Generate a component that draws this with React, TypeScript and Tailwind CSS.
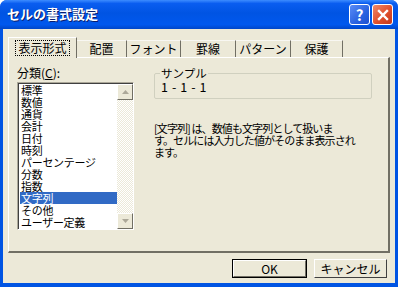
import React from "react";

const jp = { fontFamily: '"Noto Sans CJK JP", "Noto Sans", sans-serif' };

const categories = [
  "標準",
  "数値",
  "通貨",
  "会計",
  "日付",
  "時刻",
  "パーセンテージ",
  "分数",
  "指数",
  "文字列",
  "その他",
  "ユーザー定義",
];

const tabs = [
  { label: "配置", w: "w-[50px]" },
  { label: "フォント", w: "w-[54px]" },
  { label: "罫線", w: "w-[55px]" },
  { label: "パターン", w: "w-[55px]" },
  { label: "保護", w: "w-[52px]" },
];

function TitleButtons() {
  return (
    <div className="flex gap-[2px] pt-[4px]">
      <div className="flex h-[21px] w-[21px] items-center justify-center rounded-[3px] border border-white bg-[linear-gradient(135deg,#5a8cf7,#2a63e0_60%,#1b4fd1)] text-[15px] font-bold leading-none text-white">
        ?
      </div>
      <div className="flex h-[21px] w-[21px] items-center justify-center rounded-[3px] border border-white bg-[linear-gradient(135deg,#f08a6a,#e0502c_55%,#c4381c)]">
        <svg width="12" height="12" viewBox="0 0 12 12">
          <path d="M2 2L10 10M10 2L2 10" stroke="white" strokeWidth="2.4" strokeLinecap="square" />
        </svg>
      </div>
    </div>
  );
}

function ScrollArrow({ up }: { up: boolean }) {
  return (
    <div className="flex h-[16px] w-[16px] items-center justify-center border-t border-l border-r border-b border-t-white border-l-white border-r-[#716f64] border-b-[#716f64] bg-[#ece9d8]">
      <svg width="7" height="4" viewBox="0 0 7 4">
        <path d={up ? "M3.5 0L7 4H0Z" : "M0 0H7L3.5 4Z"} fill="#aca899" />
      </svg>
    </div>
  );
}

export default function App() {
  return (
    <div
      className="flex h-[287px] w-[398px] flex-col overflow-hidden rounded-t-[7px] bg-[#0054e3] text-[12px] text-black"
      style={jp}
    >
      {/* Title bar */}
      <div className="flex h-[29px] shrink-0 items-start justify-between bg-[linear-gradient(#3d8cff_0%,#0a5df0_12%,#0054e3_45%,#0058ee_85%,#0046c8_100%)] pl-[7px] pr-[5px]">
        <span className="pt-[6px] text-[13px] font-bold leading-[16px] text-white [text-shadow:1px_1px_#0a1e6e]">
          セルの書式設定
        </span>
        <TitleButtons />
      </div>

      {/* Body */}
      <div className="mx-[3px] mb-[4px] flex flex-1 flex-col bg-[#ece9d8] px-[5px] pt-[8px]">
        {/* Tabs */}
        <div className="relative z-10 flex h-[20px] items-end">
          <div className="-mb-[1px] flex h-[21px] w-[69px] items-center justify-center border-l border-t border-r border-l-white border-t-white border-r-[#716f64] bg-[#ece9d8]">
            <span className="border border-dotted border-black px-[2px] leading-[14px]">表示形式</span>
          </div>
          {tabs.map((t) => (
            <div
              key={t.label}
              className={`${t.w} flex h-[17px] items-center justify-center border-t border-r border-t-[#f8f7f2] border-r-[#716f64] leading-[14px]`}
            >
              {t.label}
            </div>
          ))}
        </div>

        {/* Panel */}
        <div className="flex h-[196px] w-[382px] flex-col border-t border-l border-r-2 border-b-2 border-t-white border-l-white border-r-[#716f64] border-b-[#716f64] px-[8px] pt-[8px]">
          <div className="flex">
            {/* Category list */}
            <div className="flex w-[130px] flex-col">
              <div className="h-[14px] leading-[14px]">
                分類(<span className="underline">C</span>):
              </div>
              <div className="mt-[2px] flex h-[148px] w-[117px] border-t border-l border-r border-b border-t-[#aca899] border-l-[#aca899] border-r-white border-b-white">
                <div className="flex flex-1 border-t border-l border-t-[#404040] border-l-[#404040] bg-white">
                  <div className="flex flex-1 flex-col pl-[1px]">
                    {categories.map((c) => (
                      <div
                        key={c}
                        className={`h-[12px] shrink-0 whitespace-nowrap pl-[1px] text-[11px] leading-[12px] tracking-[-0.3px] ${
                          c === "文字列" ? "bg-[#316ac5] text-white" : ""
                        }`}
                      >
                        {c}
                      </div>
                    ))}
                  </div>
                  <div className="flex w-[16px] flex-col bg-[repeating-conic-gradient(#ffffff_0_25%,#ece9d8_0_50%)] bg-[length:2px_2px]">
                    <ScrollArrow up />
                    <div className="flex-1" />
                    <ScrollArrow up={false} />
                  </div>
                </div>
              </div>
            </div>

            {/* Sample + description */}
            <div className="flex flex-1 flex-col pl-[7px]">
              <fieldset className="mt-[1px] h-[32px] w-[218px] rounded-[2px] border border-[#d0d0bf] px-[5px]">
                <legend className="px-[1px] text-[11.5px] leading-[12px]">サンプル</legend>
                <div className="mt-[1px] pl-[1px] text-[12.5px] leading-[13px] tracking-[4px]">1-1-1</div>
              </fieldset>
              <p className="mt-[23px] whitespace-nowrap text-[11px] leading-[12px] tracking-[-0.9px]">
                [文字列] は、数値も文字列として扱いま
                <br />
                す。セルには入力した値がそのまま表示され
                <br />
                ます。
              </p>
            </div>
          </div>
        </div>

        {/* Buttons */}
        <div className="flex justify-end gap-[7px] pr-[3px] pt-[6px]">
          <div className="flex h-[19px] w-[75px] items-center justify-center border border-black">
            <div className="flex h-full w-full items-center justify-center border-t border-l border-r border-b border-t-white border-l-white border-r-[#716f64] border-b-[#716f64] leading-[14px]">
              OK
            </div>
          </div>
          <div className="flex h-[19px] w-[73px] items-center justify-center border-t border-l border-r border-b border-t-white border-l-white border-r-[#404040] border-b-[#404040] leading-[14px]">
            キャンセル
          </div>
        </div>
      </div>
    </div>
  );
}
